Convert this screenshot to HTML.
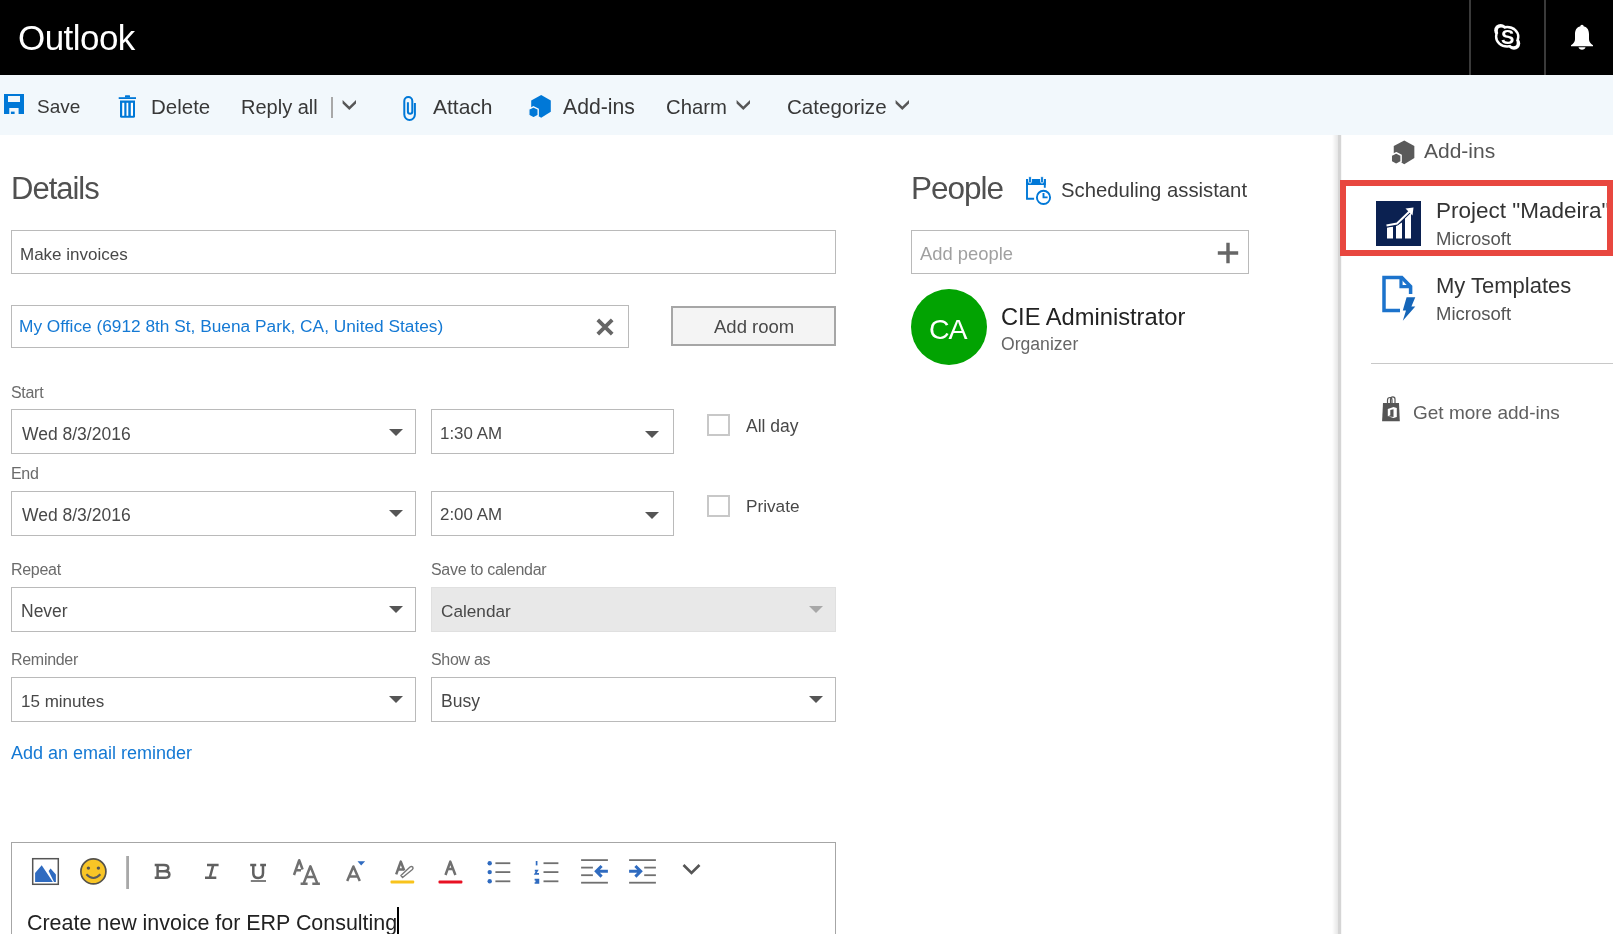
<!DOCTYPE html>
<html><head><meta charset="utf-8">
<style>
html,body{-webkit-font-smoothing:antialiased;margin:0;padding:0;width:1613px;height:934px;overflow:hidden;background:#fff;position:relative;font-family:"Liberation Sans",sans-serif;}
.a{position:absolute;}
.t{position:absolute;line-height:1;white-space:nowrap;will-change:transform;}
.box{position:absolute;box-sizing:border-box;border:1px solid #bababa;background:#fff;}
.tri{position:absolute;width:0;height:0;border-left:7px solid transparent;border-right:7px solid transparent;border-top:7px solid #555;}
.lbl{color:#6b6b6b;font-size:16px;letter-spacing:-0.3px;}
.val{color:#484848;font-size:17.5px;}
.tb{color:#383838;font-size:20px;}
</style></head><body>

<!-- header -->
<div class="a" style="left:0;top:0;width:1613px;height:75px;background:#000;"></div>
<div class="t" style="left:18px;top:20.3px;font-size:35px;letter-spacing:-0.55px;color:#fff;">Outlook</div>
<div class="a" style="left:1469px;top:0;width:2px;height:75px;background:#3a3a3a;"></div>
<div class="a" style="left:1544px;top:0;width:2px;height:75px;background:#3a3a3a;"></div>

<!-- toolbar -->
<div class="a" style="left:0;top:75px;width:1613px;height:60px;background:#f2f8fc;"></div>


<!-- header icons -->
<svg class="a" style="left:1485px;top:15px;" width="45" height="45" viewBox="0 0 45 45">
<g fill="#fff"><ellipse cx="22.2" cy="21.8" rx="12.3" ry="11"/><circle cx="15.6" cy="15.4" r="6.4"/><circle cx="29" cy="28.5" r="6.2"/></g>
<g fill="#000"><ellipse cx="22.2" cy="21.8" rx="9.85" ry="8.55"/><circle cx="16.2" cy="16" r="3.4"/><circle cx="28.4" cy="27.9" r="3.3"/></g>
</svg>
<div class="t" style="left:1500.5px;top:27px;font-size:20px;font-weight:bold;color:#fff;">S</div>
<svg class="a" style="left:1569px;top:23.1px;" width="26" height="27" viewBox="0 0 26 29" preserveAspectRatio="none">
<path d="M13,2 C14.2,2 14.6,2.8 14.6,3.6 C18.5,4.6 20,8 20,12 L20,17.5 C20,20 21.5,22 24,24 L24,25 L2,25 L2,24 C4.5,22 6,20 6,17.5 L6,12 C6,8 7.5,4.6 11.4,3.6 C11.4,2.8 11.8,2 13,2 Z" fill="#fff"/>
<path d="M9.5,26 L16.5,26 C16.2,27.6 14.8,28.6 13,28.6 C11.2,28.6 9.8,27.6 9.5,26 Z" fill="#fff"/>
</svg>

<!-- toolbar icons -->
<svg class="a" style="left:4px;top:94px;" width="20" height="20" viewBox="0 0 20 20">
<path d="M0,0 H20 V20 H14.6 V14 H5.3 V20 H0 Z M4,2 V8 H16 V2 Z" fill="#0078d7" fill-rule="evenodd"/>
<rect x="6.9" y="17.6" width="3.7" height="2.4" fill="#0078d7"/>
</svg>
<div class="t tb" style="left:36.5px;top:96.5px;font-size:19px;">Save</div>

<svg class="a" style="left:118px;top:94px;" width="19" height="25" viewBox="0 0 19 25">
<rect x="0.7" y="3.2" width="17.3" height="1.8" fill="#0078d7"/>
<rect x="7" y="1.2" width="5" height="2.2" rx="0.5" fill="#0078d7"/>
<path d="M2,6.6 H17 V22.3 Q17,23.8 15.5,23.8 H3.5 Q2,23.8 2,22.3 Z" fill="#0078d7"/>
<rect x="4.2" y="8.8" width="2.1" height="13" fill="#fff"/>
<rect x="8.5" y="8.8" width="1.8" height="13" fill="#fff"/>
<rect x="12.8" y="8.8" width="2.2" height="13" fill="#fff"/>
</svg>
<div class="t tb" style="left:150.5px;top:96.5px;font-size:20.5px;">Delete</div>

<div class="t tb" style="left:241px;top:96.5px;">Reply all</div>
<div class="a" style="left:331px;top:97px;width:2px;height:21px;background:#a8a8a8;"></div>
<svg class="a" style="left:340.6px;top:98px;" width="17" height="13" viewBox="0 0 17 13"><polygon points="1.6,2 8.3,8.5 15,2 15,5.5 8.3,12 1.6,5.5" fill="#575757"/></svg>

<svg class="a" style="left:396px;top:90px;" width="28" height="36" viewBox="0 0 28 36">
<path d="M11.9,12.3 V21.5 A2.2,2.2 0 0 0 16.3,21.5 V11 A4,4 0 0 0 8.3,11 V24.6 A5.3,5.3 0 0 0 18.9,24.6 V13.1" fill="none" stroke="#0078d7" stroke-width="2"/>
</svg>
<div class="t tb" style="left:433px;top:95.5px;font-size:21px;">Attach</div>

<svg class="a" style="left:520px;top:88px;" width="40" height="40" viewBox="0 0 40 40">
<polygon points="21.2,7.1 30.8,12.4 30.8,23.8 21.2,29.8 11.2,23.8 11.2,12.4" fill="#0078d7"/>
<polygon points="13.5,18.8 18.2,21.2 18.2,27.4 13.5,29.9 8.8,27.4 8.8,21.2" fill="#0078d7" stroke="#f2f8fc" stroke-width="1.4"/>
</svg>
<div class="t tb" style="left:563px;top:95.5px;font-size:21.2px;">Add-ins</div>

<div class="t tb" style="left:666px;top:96.5px;font-size:20.3px;">Charm</div>
<svg class="a" style="left:735.3px;top:98px;" width="17" height="13" viewBox="0 0 17 13"><polygon points="1.6,2 8.3,8.5 15,2 15,5.5 8.3,12 1.6,5.5" fill="#575757"/></svg>
<div class="t tb" style="left:787px;top:96.5px;font-size:20.6px;">Categorize</div>
<svg class="a" style="left:893.5px;top:98px;" width="17" height="13" viewBox="0 0 17 13"><polygon points="1.6,2 8.3,8.5 15,2 15,5.5 8.3,12 1.6,5.5" fill="#575757"/></svg>

<!-- details -->
<div class="t" style="left:11px;top:173px;font-size:31px;color:#505050;letter-spacing:-1px;">Details</div>
<div class="box" style="left:11px;top:230px;width:825px;height:44px;"></div>
<div class="t val" style="left:20px;top:246px;font-size:17px;">Make invoices</div>

<div class="box" style="left:11px;top:305px;width:618px;height:43px;"></div>
<div class="t" style="left:19px;top:318px;font-size:17.3px;color:#1479d4;">My Office (6912 8th St, Buena Park, CA, United States)</div>

<div class="a" style="left:671px;top:306px;width:165px;height:40px;box-sizing:border-box;border:2px solid #a6a6a6;background:#f4f4f4;"></div>
<div class="t val" style="left:714px;top:318px;font-size:18.5px;">Add room</div>

<div class="t lbl" style="left:11px;top:385px;">Start</div>
<div class="box" style="left:11px;top:409px;width:405px;height:45px;"></div>
<div class="t val" style="left:21.5px;top:426px;">Wed 8/3/2016</div>
<div class="tri" style="left:389px;top:429px;"></div>
<div class="box" style="left:431px;top:409px;width:243px;height:45px;"></div>
<div class="t val" style="left:440px;top:426px;font-size:16.9px;">1:30 AM</div>
<div class="tri" style="left:645px;top:431px;"></div>
<div class="a" style="left:707px;top:414px;width:23px;height:22px;box-sizing:border-box;border:2px solid #c8c8c8;"></div>
<div class="t val" style="left:746px;top:418px;">All day</div>

<div class="t lbl" style="left:11px;top:466px;">End</div>
<div class="box" style="left:11px;top:491px;width:405px;height:45px;"></div>
<div class="t val" style="left:21.5px;top:507px;">Wed 8/3/2016</div>
<div class="tri" style="left:389px;top:510px;"></div>
<div class="box" style="left:431px;top:491px;width:243px;height:45px;"></div>
<div class="t val" style="left:440px;top:507px;font-size:16.9px;">2:00 AM</div>
<div class="tri" style="left:645px;top:512px;"></div>
<div class="a" style="left:707px;top:495px;width:23px;height:22px;box-sizing:border-box;border:2px solid #c8c8c8;"></div>
<div class="t val" style="left:746px;top:498px;font-size:17.2px;">Private</div>

<div class="t lbl" style="left:11px;top:562px;">Repeat</div>
<div class="box" style="left:11px;top:587px;width:405px;height:45px;"></div>
<div class="t val" style="left:21px;top:603px;">Never</div>
<div class="tri" style="left:389px;top:606px;"></div>
<div class="t lbl" style="left:431px;top:562px;">Save to calendar</div>
<div class="box" style="left:431px;top:587px;width:405px;height:45px;background:#e8e8e8;border-color:#e0e0e0;"></div>
<div class="t val" style="left:440.5px;top:603px;font-size:17.2px;">Calendar</div>
<div class="tri" style="left:809px;top:606px;border-top-color:#a8a8a8;"></div>

<div class="t lbl" style="left:11px;top:652px;">Reminder</div>
<div class="box" style="left:11px;top:677px;width:405px;height:45px;"></div>
<div class="t val" style="left:20.5px;top:693px;font-size:17px;">15 minutes</div>
<div class="tri" style="left:389px;top:696px;"></div>
<div class="t lbl" style="left:431px;top:652px;">Show as</div>
<div class="box" style="left:431px;top:677px;width:405px;height:45px;"></div>
<div class="t val" style="left:441px;top:693px;">Busy</div>
<div class="tri" style="left:809px;top:696px;"></div>

<div class="t" style="left:11px;top:744px;font-size:18px;color:#1479d4;">Add an email reminder</div>

<!-- editor -->
<div class="a" style="left:11px;top:842px;width:825px;height:120px;box-sizing:border-box;border:1px solid #a6a6a6;"></div>
<div class="t" style="left:27px;top:912.5px;font-size:21.45px;color:#222;">Create new invoice for ERP Consulting</div>
<div class="a" style="left:397px;top:907px;width:1.5px;height:30px;background:#000;"></div>

<!-- people -->
<div class="t" style="left:911px;top:173px;font-size:31.5px;color:#505050;letter-spacing:-1px;">People</div>
<div class="t" style="left:1061px;top:180px;font-size:20.3px;color:#3c3c3c;">Scheduling assistant</div>
<div class="box" style="left:911px;top:230px;width:338px;height:44px;"></div>
<div class="t" style="left:920px;top:245px;font-size:18.4px;color:#a0a0a0;">Add people</div>
<div class="a" style="left:911px;top:289px;width:76px;height:76px;border-radius:50%;background:#02a302;"></div>
<div class="t" style="left:929px;top:315px;font-size:28.5px;letter-spacing:-1.2px;color:#fff;">CA</div>
<div class="t" style="left:1001px;top:305.5px;font-size:23.7px;color:#222;">CIE Administrator</div>
<div class="t" style="left:1001px;top:335.5px;font-size:17.6px;color:#666;">Organizer</div>

<!-- right panel -->
<div class="a" style="left:1332px;top:135px;width:10px;height:799px;background:linear-gradient(to right,rgba(0,0,0,0) 0px,rgba(0,0,0,0.05) 3px,rgba(0,0,0,0.09) 5.5px,rgba(0,0,0,0.165) 6.5px,rgba(0,0,0,0.165) 8.5px,rgba(0,0,0,0.03) 9.5px,rgba(0,0,0,0) 10px);"></div>
<div class="t" style="left:1424px;top:140px;font-size:21px;color:#555;">Add-ins</div>
<div class="a" style="left:1340px;top:180px;width:273px;height:76px;box-sizing:border-box;border:6px solid #e8473f;z-index:5;"></div>
<div class="a" style="left:1376px;top:201px;width:45px;height:45px;background:#0b2151;"></div>
<div class="t" style="left:1436px;top:200px;font-size:22.5px;color:#333;">Project "Madeira"</div>
<div class="t" style="left:1436px;top:229.5px;font-size:18.5px;color:#555;">Microsoft</div>
<div class="t" style="left:1436px;top:275px;font-size:22px;color:#333;">My Templates</div>
<div class="t" style="left:1436px;top:304.5px;font-size:18.5px;color:#555;">Microsoft</div>
<div class="a" style="left:1371px;top:363px;width:242px;height:1px;background:#c8c8c8;"></div>
<div class="t" style="left:1413px;top:402.5px;font-size:19px;color:#606060;">Get more add-ins</div>


<!-- location X -->
<svg class="a" style="left:595px;top:317px;" width="20" height="20" viewBox="0 0 20 20"><path d="M2.8,2.8 L17.2,17.2 M17.2,2.8 L2.8,17.2" stroke="#666" stroke-width="3.8"/></svg>

<!-- editor toolbar -->
<svg class="a" style="left:0;top:850px;" width="720" height="45" viewBox="0 850 720 45">
<!-- image -->
<rect x="32.7" y="858.7" width="25.6" height="25.6" fill="#fff" stroke="#555" stroke-width="1.5"/>
<path d="M35.1,882 V872.9 L41.7,865.2 L52.9,882 Z M48.6,870.9 L50.6,868.5 L55.9,874.5 V882 H54 Z" fill="#2f6bc0"/>
<!-- smiley -->
<circle cx="93.4" cy="871.4" r="12.5" fill="#f8c526" stroke="#55524a" stroke-width="1.7"/>
<circle cx="88.4" cy="868.1" r="1.7" fill="#555"/><circle cx="98.4" cy="868.1" r="1.7" fill="#555"/>
<path d="M86.4,874.2 Q93.4,881.8 100.4,874.2" fill="none" stroke="#5a5a5a" stroke-width="2"/>
<rect x="126.2" y="856" width="2.8" height="33" fill="#a8a8a8"/>
<g fill="none" stroke="#606060" stroke-width="2.5">
<!-- B -->
<path d="M154.7,865.1 H164 Q168.3,865.1 168.3,868.1 Q168.3,871.2 164,871.2 H157.5 M157.5,871.2 H165 Q169.4,871.2 169.4,874.5 Q169.4,877.8 165,877.8 H154.7 M157.6,865.1 V877.8"/>
<!-- I -->
<path d="M207,865.1 H218.6 M205,877.8 H216.3 M213.2,865.1 L209.8,877.8"/>
<!-- U -->
<path d="M250.2,865.1 H256.2 M260.2,865.1 H266 M253.3,865.1 V873 Q253.3,878 258.2,878 Q263,878 263,873 V865.1"/>
</g>
<rect x="250.8" y="880.2" width="15.2" height="1.6" fill="#606060"/>
<g fill="none" stroke="#707070" stroke-width="2.5" stroke-linejoin="round">
<!-- AA small -->
<path d="M294,875 L299.2,860.2 L302.6,869.5 M296.5,870.2 H301"/>
<!-- AA big -->
<path d="M303.6,883.6 L310.4,866.3 L317.4,883.6 M306.5,877.1 H314.5 M300.6,883.8 H307.6 M312.3,883.8 H319.9"/>
<!-- A grow -->
<path d="M347.2,881 L353.4,866.5 L359.8,881 M349.8,876.4 H357"/>
<!-- highlighter A -->
<path d="M396.2,874.4 L400.8,861.6 L404.2,870.5 M398.2,869.6 H403"/>
<!-- font color A -->
<path d="M445.5,875 L450.3,861.6 L455.4,875 M447.4,869 H453.3"/>
</g>
<path d="M357.5,861.2 H365.1 L361.2,865.6 Z" fill="#2f6bc0"/>
<path d="M402.6,877.5 L400.9,875.6 L410,867 Q411.5,865.8 412.7,867 Q413.6,868.2 412.4,869.5 Z" fill="#fff" stroke="#777" stroke-width="1.4" stroke-linejoin="round"/>
<rect x="390.5" y="880.5" width="23.7" height="2.9" rx="1" fill="#f8c31c"/>
<rect x="438.5" y="880.5" width="23.9" height="2.9" rx="1" fill="#e81123"/>
<!-- bullets -->
<g fill="#2f6bc0"><circle cx="489.7" cy="863.2" r="2.2"/><circle cx="489.7" cy="872.1" r="2.2"/><circle cx="489.7" cy="881.3" r="2.2"/></g>
<g fill="#707070"><rect x="495.4" y="862.3" width="14.9" height="1.8"/><rect x="495.4" y="871.2" width="14.9" height="1.8"/><rect x="495.4" y="880.4" width="14.9" height="1.8"/>
<rect x="543.5" y="862.3" width="14.9" height="1.8"/><rect x="543.5" y="871.2" width="14.9" height="1.8"/><rect x="543.5" y="880.4" width="14.9" height="1.8"/></g>
<g fill="none" stroke="#2f6bc0" stroke-width="1.7">
<path d="M536.6,861 V865.4"/>
<path d="M534.8,870.7 H537.2 L535.3,873.8 H539"/>
<path d="M534.6,879.6 H538.4 V883 H534.6 M535.5,881.3 H538.4"/>
</g>
<!-- outdent / indent -->
<g fill="#707070">
<rect x="581.1" y="859.2" width="26.8" height="1.8"/><rect x="581.1" y="866.7" width="11.8" height="1.8"/><rect x="581.1" y="874.3" width="11.8" height="1.8"/><rect x="581.1" y="881.8" width="26.8" height="1.8"/>
<rect x="629.1" y="859.2" width="26.8" height="1.8"/><rect x="644.2" y="866.7" width="11.7" height="1.8"/><rect x="644.2" y="874.3" width="11.7" height="1.8"/><rect x="629.1" y="881.8" width="26.8" height="1.8"/>
</g>
<g fill="none" stroke="#2f6bc0" stroke-width="3" stroke-linejoin="miter">
<path d="M596,871.3 H607.9 M601.6,866 L596.3,871.3 L601.6,876.6"/>
<path d="M629.1,871.3 H641 M635.4,866 L640.7,871.3 L635.4,876.6"/>
</g>
<path d="M683.5,865 L691.5,873 L699.5,865" fill="none" stroke="#555" stroke-width="2.6"/>
</svg>

<!-- people icons -->
<svg class="a" style="left:1020px;top:172px;" width="36" height="36" viewBox="0 0 36 36">
<path d="M14.1,26.8 H7 V7.9 H24.8 V15.8" fill="none" stroke="#0078d7" stroke-width="1.9"/>
<rect x="6" y="7" width="19.8" height="6" fill="#0078d7"/>
<rect x="8.6" y="4.5" width="2.8" height="6.5" rx="1.2" fill="#0078d7" stroke="#fff" stroke-width="0.9"/>
<rect x="20.6" y="4.5" width="2.8" height="6.5" rx="1.2" fill="#0078d7" stroke="#fff" stroke-width="0.9"/>
<circle cx="23.5" cy="25.4" r="6.6" fill="#fff" stroke="#0078d7" stroke-width="1.9"/>
<path d="M23.5,21 V25.4 H27.6" fill="none" stroke="#0078d7" stroke-width="1.9"/>
</svg>
<svg class="a" style="left:1215px;top:240px;" width="26" height="26" viewBox="0 0 26 26"><path d="M13,2.8 V23.2 M2.8,13 H23.2" stroke="#666" stroke-width="3.4"/></svg>

<!-- right panel icons -->
<svg class="a" style="left:1381.8px;top:132.5px;" width="42" height="42" viewBox="0 0 40 40" >
<g>
<polygon points="21.2,7.1 30.8,12.4 30.8,23.8 21.2,29.8 11.2,23.8 11.2,12.4" fill="#5a5a5a"/>
<polygon points="13.5,18.8 18.2,21.2 18.2,27.4 13.5,29.9 8.8,27.4 8.8,21.2" fill="#5a5a5a" stroke="#fff" stroke-width="1.4"/>
</g></svg>
<svg class="a" style="left:1376px;top:201px;" width="45" height="45" viewBox="0 0 45 45">
<rect width="45" height="45" fill="#0b2151"/>
<path d="M11,52 Z" />
<path d="M11,26.5 V37.5 H17 V25.8 Z" fill="#fff"/>
<path d="M20,25 V37.5 H26 V21.5 Z" fill="#fff"/>
<path d="M29,17 V37.5 H35 V11 Z" fill="#fff"/>
<path d="M10.5,24.5 L21,22.5 L35.5,8.5" fill="none" stroke="#0b2151" stroke-width="4"/>
<path d="M10.5,24.5 L21,22.5 L34.5,9.5" fill="none" stroke="#fff" stroke-width="2"/>
<path d="M29.5,7.5 L37.5,6.5 L36.5,14.5 Z" fill="#fff"/>
</svg>
<svg class="a" style="left:1370px;top:268px;" width="56" height="60" viewBox="0 0 56 60">
<path d="M30,42.5 H14 V9.6 H31.8 L40.6,18.4 V26" fill="none" stroke="#1c73cc" stroke-width="3.5"/>
<path d="M31,9.6 V18.6 H40.6" fill="none" stroke="#1c73cc" stroke-width="3.2"/>
<path d="M36.6,29.2 H45.3 L41.4,38.5 H45.3 L32.8,52.7 L36,42.4 H32.8 Z" fill="#1565b8"/>
</svg>
<svg class="a" style="left:1376px;top:390px;" width="30" height="38" viewBox="0 0 30 38">
<path d="M11.5,13 V10 Q11.5,7.5 14,7.5 Q16,7.5 16,10 V13 M14.5,13 V9 Q14.5,6.8 16.8,6.8 Q19,6.8 19,9 V13" fill="none" stroke="#555" stroke-width="1.2"/>
<path d="M7,13 H23 L23.8,31.3 H6.1 Z" fill="#555"/>
<path d="M11.8,19 L17.5,17.1 L20.8,18 V27 L17.5,28.1 L11.8,26.3 L17.5,27 V19.2 L14.3,20 V25.3 L11.8,26.3 Z" fill="#fff"/>
</svg>

</body></html>
